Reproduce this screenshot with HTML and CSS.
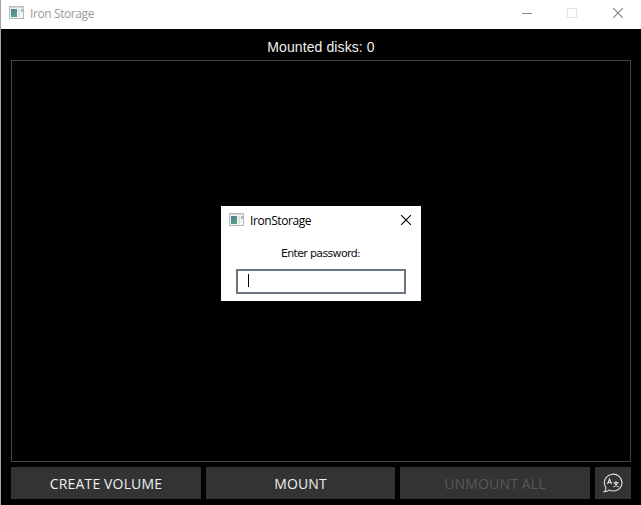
FILE: index.html
```html
<!DOCTYPE html>
<html lang="en">
<head>
<meta charset="utf-8">
<title>Iron Storage</title>
<link rel="stylesheet" href="styles.css">
</head>
<body>
<svg class="defs" width="0" height="0" aria-hidden="true">
  <defs>
    <linearGradient id="pane" x1="0" y1="0" x2="0.7" y2="1"><stop offset="0" stop-color="#55758c"/><stop offset="1" stop-color="#55a784"/></linearGradient>
    <symbol id="app" viewBox="0 0 15 13">
      <rect x=".5" y=".5" width="14" height="12" fill="#f3f5f6" stroke="#b3babd"/>
      <path d="M1 1.5h13" stroke="#d3dce1"/>
      <rect x="2" y="3" width="6" height="8" fill="url(#pane)"/>
      <rect x="9" y="3" width="2" height="8" fill="#dfe5e7"/>
      <rect x="12" y="3" width="2" height="3" fill="#a9bec2"/>
    </symbol>
  </defs>
</svg>
<div class="window">
  <header class="titlebar">
    <svg class="app-icon"><use href="#app"/></svg>
    <span class="title">Iron Storage</span>
    <div class="controls">
      <svg width="10" height="10" viewBox="0 0 10 10"><path d="M0 5.5h10" stroke="#858585"/></svg>
      <svg class="maximize" width="10" height="10" viewBox="0 0 10 10"><rect x=".5" y=".5" width="9" height="9" fill="none" stroke="#e5e5e5"/></svg>
      <svg width="10" height="10" viewBox="0 0 10 10"><path d="M0 0L10 10M10 0L0 10" stroke="#808080" stroke-width="1.1"/></svg>
    </div>
  </header>
  <main class="content">
    <div class="status"><span>Mounted disks: 0</span></div>
    <div class="disk-list"></div>
    <div class="actions">
      <button class="btn create">CREATE VOLUME</button>
      <button class="btn mount">MOUNT</button>
      <button class="btn unmount" disabled>UNMOUNT ALL</button>
      <button class="btn language" aria-label="Language">
        <svg width="20" height="20" viewBox="0 0 20 20" fill="none" stroke="#e2e2e2" stroke-width="1.1">
          <path d="M2.8 14.2A8.8 8.4 0 1 1 6.2 17.1Q4 18.8 1.2 18.7Q3.3 17 2.8 14.2Z"/>
          <path d="M4.5 11L6.5 6L8.5 11M5.2 9.5h2.6"/>
          <path d="M10.3 9.7h5.4M13 8.2v1.5M14.6 9.7Q13.6 12.8 10.4 13.8M11.4 9.7Q12.4 12.8 15.6 13.8"/>
        </svg>
      </button>
    </div>
  </main>
</div>
<section class="dialog" role="dialog">
  <header class="dialog-head">
    <svg class="app-icon"><use href="#app"/></svg>
    <span class="dialog-title">IronStorage</span>
    <svg class="close" width="10" height="10" viewBox="0 0 10 10"><path d="M0 0L10 10M10 0L0 10" stroke="#000" stroke-width="1.1"/></svg>
  </header>
  <div class="prompt"><span>Enter password:</span></div>
  <div class="field"><i class="caret"></i></div>
</section>
</body>
</html>
```

FILE: styles.css
```css
* { box-sizing: border-box; }
body { margin: 0; background: #000; overflow: hidden; }
.defs { position: absolute; }
svg { display: block; flex: none; }
.window {
  height: 505px;
  display: flex;
  flex-direction: column;
  border-left: 1px solid #a3a3a3;
}
.titlebar {
  height: 29px;
  flex: none;
  display: flex;
  align-items: center;
  padding: 0 18px 3px 8px;
  background: #fff;
}
.app-icon { width: 15px; height: 13px; margin-bottom: 1px; }
.title {
  margin-left: 6px;
  padding-top: 2px;
  font: 12px/16px "Open Sans", sans-serif;
  letter-spacing: -0.4px;
  color: #999;
  white-space: nowrap;
}
.controls { display: flex; gap: 35px; margin-left: auto; }
.maximize { margin-right: 1px; }
.content {
  flex: 1;
  display: flex;
  flex-direction: column;
  padding: 0 10px 6px;
}
.status {
  height: 31px;
  padding-top: 10px;
  text-align: center;
  font: 14px/17px "Liberation Sans", sans-serif;
  letter-spacing: 0.1px;
  color: #f0f0f0;
}
.disk-list { flex: 1; border: 1px solid #454545; }
.actions {
  display: grid;
  grid-template-columns: 190px 189px 190px 36px;
  gap: 5px;
  height: 32px;
  margin-top: 5px;
}
.btn {
  display: flex;
  align-items: center;
  justify-content: center;
  border: 0;
  padding: 2px 0 0;
  background: #333;
  color: #f0f0f0;
  font: 14px/20px "Open Sans", sans-serif;
  letter-spacing: 0.15px;
  white-space: nowrap;
}
.btn:disabled { color: #5a5a5a; }
.language { padding: 0; }
.dialog {
  position: absolute;
  left: 221px;
  top: 206px;
  width: 200px;
  height: 95px;
  padding: 0 15px;
  background: #fff;
}
.dialog-head {
  display: flex;
  align-items: center;
  height: 28px;
  margin: 0 -5px 0 -7px;
}
.dialog-head .app-icon { margin-bottom: 2px; }
.dialog-title {
  margin-left: 6px;
  padding-top: 2px;
  font: 12px/16px "Open Sans", sans-serif;
  letter-spacing: -0.42px;
  color: #000;
}
.close { margin-left: auto; }
.prompt {
  height: 35px;
  padding-top: 12px;
  text-align: center;
  font: 11px/15px "DejaVu Sans", sans-serif;
  letter-spacing: -0.65px;
  color: #111;
  white-space: nowrap;
}
.prompt span { margin-right: 1px; }
.field {
  height: 25px;
  padding: 3px 10px;
  border: 2px solid #697682;
}
.caret { display: block; width: 1px; height: 13px; background: #000; }
```
